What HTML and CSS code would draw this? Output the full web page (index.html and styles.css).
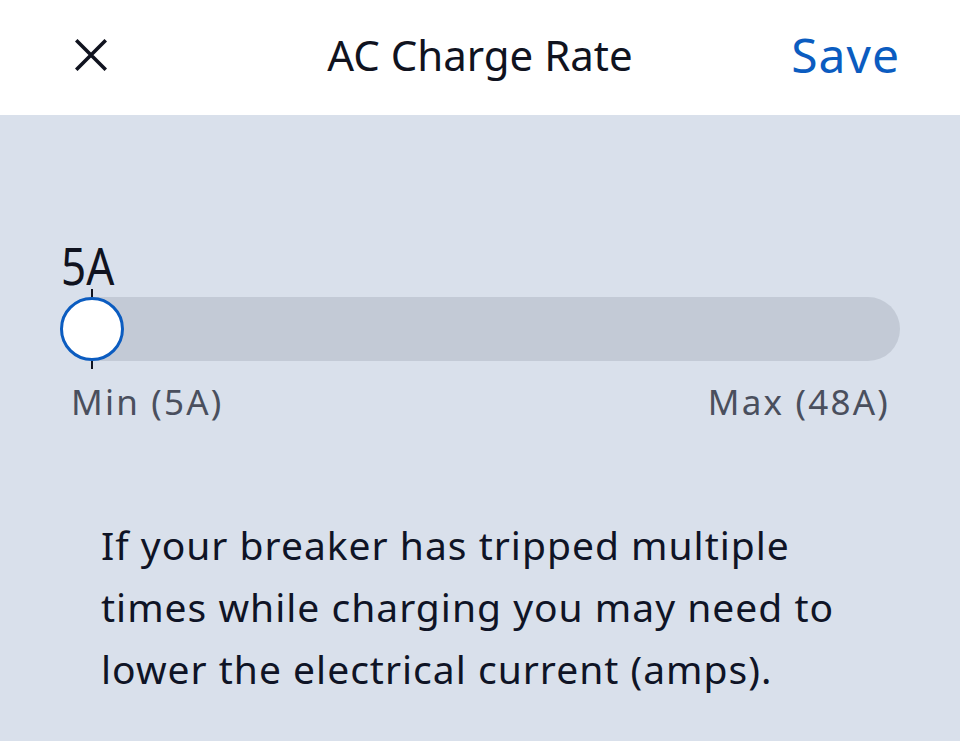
FILE: index.html
```html
<!DOCTYPE html>
<html lang="en">
<head>
<meta charset="utf-8">
<title>AC Charge Rate</title>
<link rel="stylesheet" href="styles.css">
</head>
<body>
<div class="screen">
  <header class="topbar">
    <button class="close" aria-label="Close">
      <svg width="32" height="32" viewBox="0 0 32 32"><path d="M2.5 2.5 L29.5 29.5 M29.5 2.5 L2.5 29.5" stroke="#10131f" stroke-width="3.6" stroke-linecap="square" fill="none"/></svg>
    </button>
    <h1 class="title">AC Charge Rate</h1>
    <button class="save">Save</button>
  </header>
  <main class="content">
    <section class="slider">
      <div class="value">5A</div>
      <div class="track">
        <span class="tick tick-top"></span>
        <span class="thumb"></span>
        <span class="tick tick-bottom"></span>
      </div>
      <div class="range">
        <span>Min (5A)</span>
        <span>Max (48A)</span>
      </div>
    </section>
    <p class="note">If your breaker has tripped multiple times while charging you may need to lower the electrical current (amps).</p>
  </main>
</div>
</body>
</html>
```
FILE: styles.css
```css
* { box-sizing: border-box; }
html, body { margin: 0; padding: 0; }
body {
  font-family: "Noto Sans", "Open Sans", sans-serif;
  background: #d9e0eb;
  width: 960px;
  height: 741px;
  overflow: hidden;
}
.screen { display: flex; flex-direction: column; height: 741px; }
.topbar {
  height: 115px;
  background: #ffffff;
  display: flex;
  align-items: center;
  justify-content: space-between;
  padding: 0 60px 5px 75px;
  position: relative;
}
.close {
  border: 0; background: none; padding: 0; margin: 0;
  width: 32px; height: 32px; display: flex;
}
.title {
  position: absolute;
  left: 0; right: 0; top: 0;
  margin: 0;
  text-align: center;
  line-height: 110px;
  font-size: 42px;
  font-weight: 400;
  color: #10131f;
  pointer-events: none;
}
.save {
  border: 0; background: none; padding: 0; margin: 0;
  font-family: inherit;
  font-size: 48px;
  letter-spacing: 1px;
  line-height: 1;
  color: #0b5cc0;
}
.content {
  flex: 1;
  background: #d9e0eb;
  padding: 130px 60px 0 60px;
}
.value {
  font-size: 44px;
  line-height: 50px;
  color: #10131f;
  margin-left: 1px;
  height: 52px;
  transform: scaleY(1.18);
  transform-origin: left bottom;
}
.track {
  position: relative;
  height: 64px;
  border-radius: 32px;
  background: #c3cad6;
}
.thumb {
  position: absolute;
  left: 0; top: 0;
  width: 64px; height: 64px;
  border-radius: 50%;
  background: #ffffff;
  border: 3px solid #0b5cc0;
}
.tick {
  position: absolute;
  left: 31px;
  width: 2px;
  height: 8px;
  background: #10131f;
}
.tick-top { top: -8px; }
.tick-bottom { bottom: -8px; }
.range {
  display: flex;
  justify-content: space-between;
  padding: 17px 10px 0 11px;
  font-size: 35px;
  letter-spacing: 2.2px;
  color: #4a4f5d;
}
.note {
  margin: 89px 0 0 41px;
  font-size: 39px;
  letter-spacing: 1px;
  line-height: 62px;
  color: #0f1426;
  max-width: 760px;
}
```
